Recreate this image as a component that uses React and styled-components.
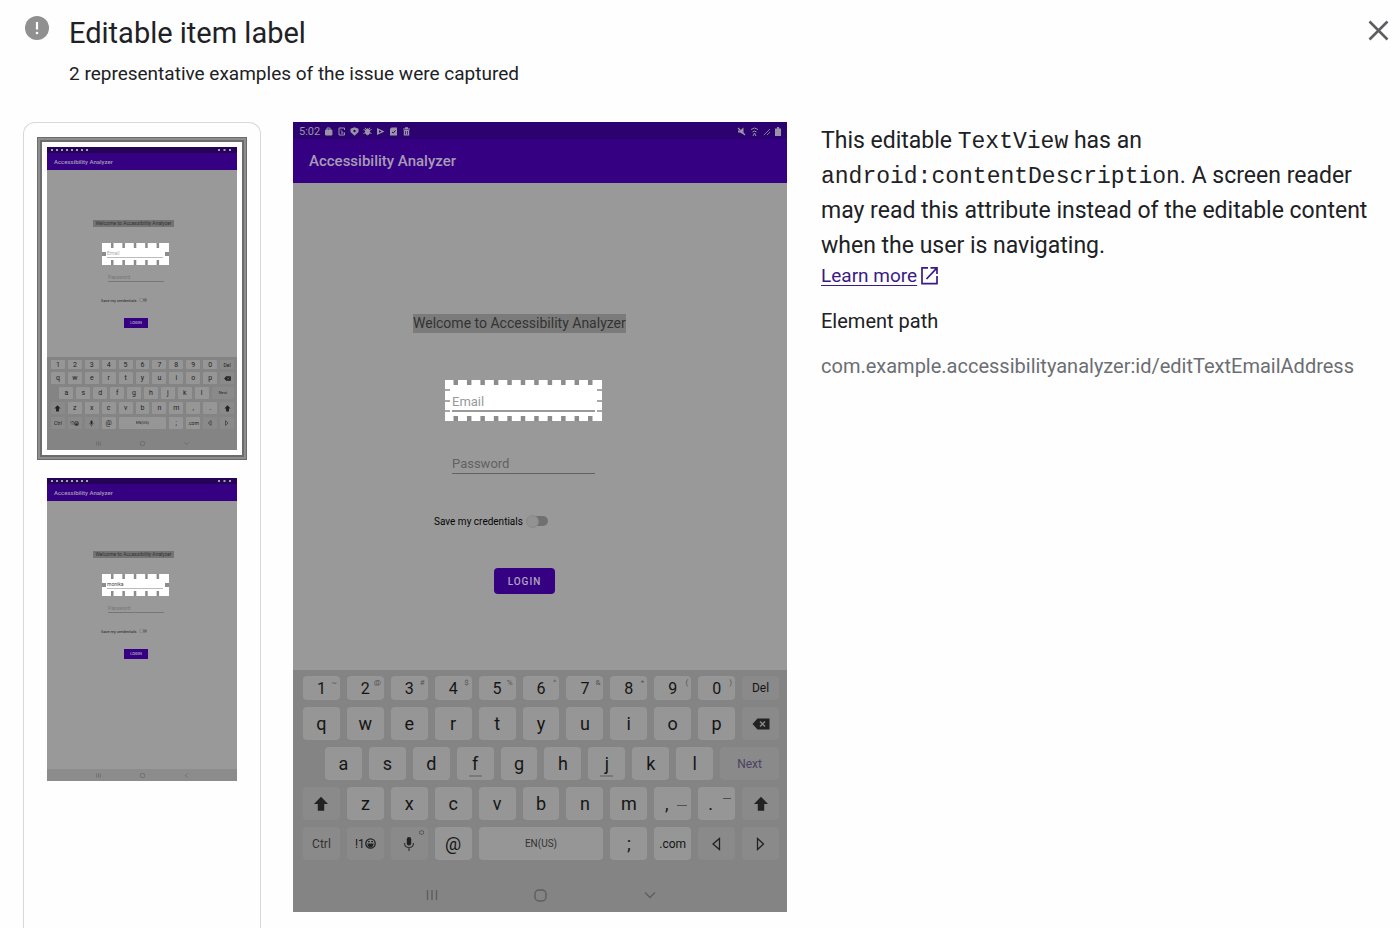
import React from "react";
import styled, { createGlobalStyle, css } from "styled-components";

const GlobalStyle = createGlobalStyle`
  *, *::before, *::after { box-sizing: border-box; }
  body {
    margin: 0;
    background: #fefefe;
    color: #202124;
    font-family: Roboto, "Liberation Sans", sans-serif;
  }
  button, input { font: inherit; color: inherit; margin: 0; padding: 0; border: 0; background: none; }
  button { cursor: pointer; }
`;

/* ---------- Dialog ---------- */

const Dialog = styled.main`
  display: flex;
  flex-direction: column;
  min-height: 100vh;
`;

const Header = styled.header`
  display: flex;
  align-items: flex-start;
  padding: 16px 11px 0 25px;
  height: 122px;
`;

const HeaderText = styled.div`
  flex: 1;
  padding-left: 20px;
`;

const Title = styled.h1`
  margin: 0;
  font-size: 29px;
  line-height: 34px;
  font-weight: 400;
`;

const Subtitle = styled.p`
  margin: 12px 0 0;
  font-size: 19px;
  line-height: 24px;
`;

const CloseButton = styled.button`
  display: flex;
  margin-top: 4px;
`;

const Content = styled.div`
  flex: 1;
  display: grid;
  grid-template-columns: 238px 494px minmax(0, 1fr);
  column-gap: 32px;
  padding: 0 24px 0 23px;
`;

const ThumbList = styled.nav`
  display: flex;
  flex-direction: column;
  align-items: center;
  gap: 8px;
  padding: 14px 0;
  border: 1px solid #d5d8dc;
  border-bottom: 0;
  border-radius: 12px 12px 0 0;
`;

const Thumb = styled.button`
  padding: 10px;
  ${(p) =>
    p.$selected &&
    css`
      box-shadow: inset 0 0 0 1px #6c6c6c, inset 0 0 0 3px #8e8e8e, inset 0 0 0 5px #6c6c6c;
    `}
`;

/* ---------- Captured screen ---------- */

const Screen = styled.section`
  display: flex;
  flex-direction: column;
  height: 790px;
  background: #999;
  color: #151515;
`;

const StatusBar = styled.div`
  display: flex;
  align-items: center;
  justify-content: space-between;
  height: 17px;
  padding: 2px 6px 0 6px;
  background: #2c0270;
  color: #9a93a8;
  font-size: 11px;
`;

const StatusGroup = styled.div`
  display: flex;
  align-items: center;
  gap: 4px;
`;

const AppBar = styled.div`
  display: flex;
  align-items: center;
  height: 44px;
  padding-left: 16px;
  background: #360083;
  color: #a69cb5;
  font-size: 15px;
  font-weight: 500;
`;

const Form = styled.form`
  flex: 1;
  display: flex;
  flex-direction: column;
  align-items: flex-start;
  padding: 131px 0 0 120px;
`;

const Welcome = styled.div`
  background: #7b7b7b;
  color: #333;
  font-size: 14px;
  line-height: 19px;
`;

const Highlight = styled.div`
  position: relative;
  width: 157px;
  height: 41px;
  margin: 47px 0 0 32px;
  padding: 10px 7px 8px;
  background: #fff;
`;

const Teeth = styled.svg`
  position: absolute;
  inset: 0;
`;

const Field = styled.input`
  display: block;
  width: 143px;
  height: 22px;
  padding-top: 2px;
  border-bottom: 1px solid #626262;
  outline: 0;
  font-size: 13px;
  &::placeholder { color: #626262; opacity: 1; }
`;

const EmailField = styled(Field)`
  border-bottom: 2px solid #9a9a9a;
  &::placeholder { color: #999; }
`;

const PasswordField = styled(Field)`
  margin: 31px 0 0 39px;
`;

const SaveRow = styled.label`
  display: flex;
  align-items: center;
  gap: 3px;
  height: 20px;
  margin: 37px 0 0 21px;
  font-size: 10px;
  color: #050505;
`;

const Switch = styled.input`
  appearance: none;
  display: flex;
  align-items: center;
  width: 22px;
  height: 10px;
  border-radius: 5px;
  background: linear-gradient(90deg, transparent 8px, #707070 8px);
  &::before {
    content: "";
    width: 13px;
    height: 13px;
    flex: none;
    border-radius: 50%;
    background: #929292;
    border: 1px solid #898989;
  }
`;

const Login = styled.button`
  width: 61px;
  height: 26px;
  margin: 37px 0 0 81px;
  border-radius: 4px;
  background: #360083;
  color: #b0a5bf;
  font-size: 10px;
  font-weight: 500;
  letter-spacing: 1px;
`;

const Keyboard = styled.div`
  display: flex;
  flex-direction: column;
  gap: 7px;
  height: 242px;
  padding: 6px 8px 0 10px;
  background: #848484;
`;

const KeyRow = styled.div`
  display: grid;
  grid-template-columns: repeat(22, minmax(0, 1fr));
  column-gap: 7px;
  height: ${(p) => (p.$short ? 24 : 33)}px;
`;

const Key = styled.button`
  position: relative;
  display: flex;
  align-items: center;
  justify-content: center;
  grid-column: ${(p) => (p.$start ? `${p.$start} / ` : "")} span ${(p) => p.$span || 2};
  border-radius: 4px;
  background: ${(p) => (p.$dim ? "#8a8a8a" : "#969696")};
  color: ${(p) => p.$color || "#151515"};
  font-size: ${(p) => p.$size || 18}px;
`;

const CommaKey = styled(Key)`
  padding-right: 12px;
`;

const PeriodKey = styled(Key)`
  padding-right: 12px;
`;

const Hint = styled.sup`
  position: absolute;
  top: 2px;
  right: 3px;
  font-size: 8px;
  line-height: 9px;
  color: #555;
`;

const Dash = styled.span`
  position: absolute;
  top: ${(p) => (p.$high ? 11 : 18)}px;
  right: 4px;
  width: ${(p) => (p.$high ? 8 : 10)}px;
  height: 1px;
  background: #505050;
`;

const HomeMark = styled.span`
  position: absolute;
  bottom: 3px;
  width: 13px;
  height: 2px;
  background: #7a7a7a;
`;

const NavBar = styled.div`
  display: flex;
  flex: 1;
  align-items: center;
  justify-content: space-around;
  padding: 11px 75px 0;
`;

/* ---------- Details ---------- */

const Details = styled.section`
  padding: 1px 0 0 2px;
`;

const Description = styled.p`
  margin: 0;
  font-size: 23px;
  line-height: 35px;
  code {
    font-family: "Courier New", "Liberation Mono", monospace;
    font-size: 23px;
    line-height: 24px;
  }
`;

const LearnMore = styled.a`
  display: flex;
  align-items: center;
  gap: 2px;
  height: 24px;
  color: #3b1a86;
  font-size: 19px;
  text-underline-offset: 3px;
`;

const PathLabel = styled.h2`
  margin: 22px 0 0;
  font-size: 20px;
  line-height: 24px;
  font-weight: 400;
`;

const PathValue = styled.p`
  margin: 21px 0 0;
  font-size: 20px;
  line-height: 24px;
  color: #6b6e72;
  overflow-wrap: anywhere;
`;

/* ---------- Thumbnail parts ---------- */

const Mini = styled.span`
  display: flex;
  flex-direction: column;
  width: 190px;
  height: 303px;
  background: #999;
  color: #333;
  text-align: left;
`;

const MiniStatus = styled.span`
  display: flex;
  align-items: center;
  justify-content: space-between;
  height: 6px;
  padding: 0 3px;
  background: #250458;
`;

const MiniBar = styled.span`
  display: flex;
  align-items: center;
  height: 17px;
  padding-left: 7px;
  background: #360083;
  color: #a69cb5;
  font-size: 6px;
  font-weight: 500;
`;

const MiniBody = styled.span`
  flex: 1;
  display: flex;
  flex-direction: column;
  align-items: flex-start;
  padding: 50px 0 0 46px;
`;

const MiniWelcome = styled.span`
  width: 81px;
  background: #747474;
  color: #333;
  font-size: 5px;
  line-height: 7px;
  text-align: center;
  white-space: nowrap;
`;

const MiniHighlight = styled.span`
  position: relative;
  display: block;
  width: 67px;
  height: 22px;
  margin: 16px 0 0 9px;
  padding: 7px 5px 0;
  background: #fff;
`;

const MiniField = styled.span`
  display: block;
  width: 56px;
  height: 8px;
  border-bottom: 1px solid ${(p) => (p.$lit ? "#bbb" : "#777")};
  color: ${(p) => (p.$filled ? "#444" : p.$lit ? "#aaa" : "#757575")};
  font-size: 5px;
  line-height: 7px;
`;

const MiniPassword = styled(MiniField)`
  margin: 9px 0 0 15px;
`;

const MiniSave = styled.span`
  display: flex;
  align-items: center;
  gap: 2px;
  margin: 14px 0 0 8px;
  height: 8px;
  color: #222;
  font-size: 4px;
`;

const MiniSwitch = styled.span`
  width: 8px;
  height: 4px;
  border-radius: 2px;
  border: 1px solid #8a8a8a;
  border-right: 4px solid #707070;
`;

const MiniLogin = styled.span`
  width: 24px;
  height: 10px;
  margin: 14px 0 0 31px;
  background: #360083;
  color: #b5abc4;
  font-size: 4px;
  font-weight: 500;
  line-height: 10px;
  text-align: center;
`;

const MiniKeyboard = styled.span`
  display: flex;
  flex-direction: column;
  gap: 3px;
  height: 79px;
  padding: 3px 3px 0 4px;
  background: #848484;
`;

const MiniRow = styled.span`
  display: grid;
  grid-template-columns: repeat(22, minmax(0, 1fr));
  column-gap: 3px;
  height: ${(p) => (p.$short ? 9 : 12)}px;
`;

const MiniKey = styled.span`
  display: flex;
  align-items: center;
  justify-content: center;
  grid-column: ${(p) => (p.$start ? `${p.$start} / ` : "")} span ${(p) => p.$span || 2};
  border-radius: 1px;
  background: ${(p) => (p.$dim ? "#8a8a8a" : "#969696")};
  color: #222;
  font-size: ${(p) => p.$size || 7}px;
  line-height: 8px;
`;

const MiniNav = styled.span`
  display: flex;
  align-items: center;
  justify-content: space-around;
  height: ${(p) => (p.$tall ? 14 : 12)}px;
  padding: 0 29px;
  background: ${(p) => (p.$tall ? "#848484" : "#8c8c8c")};
`;

/* ---------- Icons ---------- */

const AlertIcon = () => (
  <svg width="24" height="24" viewBox="0 0 24 24" aria-hidden="true">
    <circle cx="12" cy="12" r="12" fill="#909090" />
    <path d="M12 6v7.5" stroke="#fff" strokeWidth="2.2" />
    <circle cx="12" cy="17" r="1.3" fill="#fff" />
  </svg>
);

const CloseIcon = () => (
  <svg width="21" height="21" viewBox="0 0 21 21" aria-hidden="true">
    <path d="M1.5 1.5l18 18M19.5 1.5l-18 18" stroke="#5c5e61" strokeWidth="2.6" />
  </svg>
);

const ExternalIcon = () => (
  <svg width="21" height="21" viewBox="0 0 21 21" fill="none" stroke="#3b1a86" strokeWidth="1.7" aria-hidden="true">
    <path d="M9 2.8H3v15.900h15V11M11.500 2.800H18v6.200M18 2.800L7.500 14" />
  </svg>
);

const BagIcon = () => (
  <svg width="9" height="9" viewBox="0 0 9 9"><path d="M3 3V1h3v2" stroke="currentColor" fill="none" /><rect x="1" y="2.5" width="7.4" height="6" rx="1.2" fill="currentColor" /></svg>
);
const PhotoIcon = () => (
  <svg width="9" height="9" viewBox="0 0 9 9" fill="none" stroke="currentColor"><path d="M7.500 3V1H2v7h5.500V5.500M3.500 3.200l2.500 2.300M4 6h2.500" /></svg>
);
const ShieldIcon = () => (
  <svg width="9" height="9" viewBox="0 0 9 9"><path d="M4.500.3l4 1.400v3.300L4.500 8.800.5 5V1.700z" fill="currentColor" /><circle cx="4.5" cy="4" r="1.2" fill="#2c0270" /></svg>
);
const BugIcon = () => (
  <svg width="9" height="9" viewBox="0 0 9 9" stroke="currentColor"><path d="M.5 2.500l8 4M.5 6.500l8-4M2 .8l1 1.500M7 .8L6 2.300" /><ellipse cx="4.500" cy="4.800" rx="2" ry="3" fill="currentColor" /></svg>
);
const PlayIcon = () => (
  <svg width="9" height="9" viewBox="0 0 9 9"><path d="M1 1l7.500 3.500L1 8z" fill="currentColor" /><path d="M3 3.200l2.500 1.300L3 5.800z" fill="#2c0270" /></svg>
);
const CheckIcon = () => (
  <svg width="9" height="9" viewBox="0 0 9 9"><path d="M2.500.5h5.500V8.500H1V2z" fill="currentColor" /><path d="M3 5l1.300 1L6.500 3.500" stroke="#2c0270" fill="none" /></svg>
);
const TrashIcon = () => (
  <svg width="9" height="9" viewBox="0 0 9 9"><path d="M1 1.500h7v1H1zM3 .3h3v1.200H3zM1.800 3h5.400v5.500H1.800z" fill="currentColor" /><path d="M3.500 4v3.500M5.500 4v3.500" stroke="#2c0270" strokeWidth=".7" /></svg>
);
const MuteIcon = () => (
  <svg width="9" height="9" viewBox="0 0 9 9"><path d="M1 3.500h2L6.500.5v7L3 5.500H1z" fill="currentColor" /><path d="M1 1l7 7" stroke="currentColor" strokeWidth="1.300" /></svg>
);
const WifiIcon = () => (
  <svg width="9" height="10" viewBox="0 0 9 10" fill="none" stroke="currentColor"><path d="M1 2.500Q4.500-.5 8 2.500M2.500 5Q4.500 3 6.500 5M3 9l1.500-3L6 9" /></svg>
);
const SignalIcon = () => (
  <svg width="8" height="9" viewBox="0 0 8 9" fill="none" stroke="currentColor" strokeWidth=".8"><path d="M1 8l6-6M4 8l3-3" /></svg>
);
const BatteryIcon = () => (
  <svg width="6" height="9" viewBox="0 0 6 9"><path d="M2 0h2v1.500h2V9H0V1.500h2z" fill="currentColor" /></svg>
);

const ShiftIcon = ({ size = 16 }) => (
  <svg width={size} height={size} viewBox="0 0 16 16"><path d="M8 .8l7 7.200h-3.800v6.700H4.800V8H1z" fill="#222" /></svg>
);
const BackspaceIcon = ({ size = 18 }) => (
  <svg width={size} height={size} viewBox="0 0 18 18"><path d="M5.500 3.500H17.500v11H5.500L.5 9z" fill="#222" /><path d="M8 6.500l5 5M13 6.500l-5 5" stroke="#8a8a8a" strokeWidth="1.500" /></svg>
);
const MicIcon = ({ size = 16 }) => (
  <svg width={size} height={size} viewBox="0 0 16 16"><rect x="5.800" y="1" width="4.400" height="8.500" rx="2.200" fill="#222" /><path d="M3.500 7c0 6 9 6 9 0M8 11.500V15" stroke="#333" fill="none" strokeWidth="1.200" /></svg>
);
const SmileIcon = ({ size = 11 }) => (
  <svg width={size} height={size} viewBox="0 0 11 11"><circle cx="5.500" cy="5.500" r="4.700" fill="none" stroke="#222" strokeWidth="1.300" /><path d="M3 6h5q-.5 2.800-2.500 2.800T3 6zM3 3.700h1.800M6.200 3.700H8" stroke="#222" fill="#222" strokeWidth="1.200" /></svg>
);
const TriangleIcon = ({ right, size = 14 }) => (
  <svg width={size} height={size} viewBox="0 0 14 14" fill="none" stroke="#222" strokeWidth="1.300">
    <path d={right ? "M3.500 1.500v11l6-5.500z" : "M9.500 1.500v11L3 7z"} />
  </svg>
);
const GearIcon = () => (
  <svg width="7" height="7" viewBox="0 0 7 7" fill="none" stroke="#555"><circle cx="3.500" cy="3.500" r="2" strokeDasharray="1.400 .5" strokeWidth="1.200" /></svg>
);
const RecentsIcon = ({ size = 12 }) => (
  <svg width={size} height={size} viewBox="0 0 12 12" stroke="#5e5e5e" strokeWidth="1.400"><path d="M1.500 1v10M6 1v10M10.500 1v10" /></svg>
);
const HomeIcon = ({ size = 13 }) => (
  <svg width={size} height={size} viewBox="0 0 13 13" fill="none" stroke="#5e5e5e" strokeWidth="1.400"><rect x="1" y="1" width="11" height="11" rx="4" /></svg>
);
const DownIcon = ({ size = 12 }) => (
  <svg width={size} height={size} viewBox="0 0 12 12" fill="none" stroke="#5e5e5e" strokeWidth="1.400"><path d="M1 3.500l5 5 5-5" /></svg>
);
const BackIcon = ({ size = 12 }) => (
  <svg width={size} height={size} viewBox="0 0 12 12" fill="none" stroke="#5e5e5e" strokeWidth="1.400"><path d="M8.500 1l-5 5 5 5" /></svg>
);

/* ---------- Keyboard content ---------- */

const digits = [
  ["1", "~"], ["2", "@"], ["3", "#"], ["4", "$"], ["5", "%"],
  ["6", "^"], ["7", "&"], ["8", "*"], ["9", "("], ["0", ")"],
];

const Letters = ({ text, start }) =>
  [...text].map((c, i) => (
    <Key key={c} type="button" $start={i === 0 ? start : undefined}>
      {c}
      {(c === "f" || c === "j") && <HomeMark />}
    </Key>
  ));

const MiniLetters = ({ text, start }) =>
  [...text].map((c, i) => (
    <MiniKey key={c} $start={i === 0 ? start : undefined}>{c}</MiniKey>
  ));

function FullKeyboard() {
  return (
    <Keyboard>
      <KeyRow $short>
        {digits.map(([d, h]) => (
          <Key key={d} type="button" $size={16}>{d}<Hint>{h}</Hint></Key>
        ))}
        <Key type="button" $dim $size={12}>Del</Key>
      </KeyRow>
      <KeyRow>
        <Letters text="qwertyuiop" />
        <Key type="button" $dim aria-label="Backspace"><BackspaceIcon /></Key>
      </KeyRow>
      <KeyRow>
        <Letters text="asdfghjkl" start={2} />
        <Key type="button" $dim $span={3} $size={12} $color="#4b4062">Next</Key>
      </KeyRow>
      <KeyRow>
        <Key type="button" $dim aria-label="Left shift"><ShiftIcon /></Key>
        <Letters text="zxcvbnm" />
        <CommaKey type="button">,<Dash /></CommaKey>
        <PeriodKey type="button">.<Dash $high /></PeriodKey>
        <Key type="button" $dim aria-label="Right shift"><ShiftIcon /></Key>
      </KeyRow>
      <KeyRow>
        <Key type="button" $dim $size={12} $color="#333">Ctrl</Key>
        <Key type="button" $dim $size={12}>!1<SmileIcon /></Key>
        <Key type="button" $dim aria-label="Voice input"><MicIcon /><Hint><GearIcon /></Hint></Key>
        <Key type="button">@</Key>
        <Key type="button" $span={6} $size={10} $color="#333">EN(US)</Key>
        <Key type="button">;</Key>
        <Key type="button" $size={12}>.com</Key>
        <Key type="button" $dim aria-label="Cursor left"><TriangleIcon /></Key>
        <Key type="button" $dim aria-label="Cursor right"><TriangleIcon right /></Key>
      </KeyRow>
      <NavBar><RecentsIcon /><HomeIcon /><DownIcon /></NavBar>
    </Keyboard>
  );
}

function SmallKeyboard() {
  return (
    <MiniKeyboard>
      <MiniRow $short>
        <MiniLetters text="1234567890" />
        <MiniKey $dim $size={5}>Del</MiniKey>
      </MiniRow>
      <MiniRow>
        <MiniLetters text="qwertyuiop" />
        <MiniKey $dim><BackspaceIcon size={7} /></MiniKey>
      </MiniRow>
      <MiniRow>
        <MiniLetters text="asdfghjkl" start={2} />
        <MiniKey $dim $span={3} $size={4}>Next</MiniKey>
      </MiniRow>
      <MiniRow>
        <MiniKey $dim><ShiftIcon size={7} /></MiniKey>
        <MiniLetters text="zxcvbnm,." />
        <MiniKey $dim><ShiftIcon size={7} /></MiniKey>
      </MiniRow>
      <MiniRow>
        <MiniKey $dim $size={5}>Ctrl</MiniKey>
        <MiniKey $dim $size={5}>!1<SmileIcon size={5} /></MiniKey>
        <MiniKey $dim><MicIcon size={7} /></MiniKey>
        <MiniKey>@</MiniKey>
        <MiniKey $span={6} $size={4}>EN(US)</MiniKey>
        <MiniKey>;</MiniKey>
        <MiniKey $size={5}>.com</MiniKey>
        <MiniKey $dim><TriangleIcon size={6} /></MiniKey>
        <MiniKey $dim><TriangleIcon right size={6} /></MiniKey>
      </MiniRow>
    </MiniKeyboard>
  );
}

function MiniScreen({ email, filled, keyboard }) {
  return (
    <Mini>
      <MiniStatus>
        <svg width="48" height="4" viewBox="0 0 48 4"><path d="M1 2h40" stroke="#a79fb5" strokeWidth="2" strokeDasharray="2 3" /></svg>
        <svg width="18" height="4" viewBox="0 0 18 4"><path d="M2 2h15" stroke="#a79fb5" strokeWidth="2" strokeDasharray="2 3.500" /></svg>
      </MiniStatus>
      <MiniBar>Accessibility Analyzer</MiniBar>
      <MiniBody>
        <MiniWelcome>Welcome to Accessibility Analyzer</MiniWelcome>
        <MiniHighlight>
          <MiniField $lit $filled={filled}>{email}</MiniField>
          <Teeth width="67" height="22" viewBox="0 0 67 22" stroke="#8c8c8c" fill="none">
            <path d="M9 2.500H60M9 19.500H60" strokeWidth="5" strokeDasharray="2.500 8.900" />
            <path d="M0 11h4M63 11h4" strokeWidth="4" />
          </Teeth>
        </MiniHighlight>
        <MiniPassword>Password</MiniPassword>
        <MiniSave>Save my credentials<MiniSwitch /></MiniSave>
        <MiniLogin>LOGIN</MiniLogin>
      </MiniBody>
      {keyboard && <SmallKeyboard />}
      <MiniNav $tall={keyboard}>
        <RecentsIcon size={5} /><HomeIcon size={5} />
        {keyboard ? <DownIcon size={5} /> : <BackIcon size={5} />}
      </MiniNav>
    </Mini>
  );
}

function CapturedScreen() {
  return (
    <Screen aria-label="Captured screen">
      <StatusBar>
        <StatusGroup>
          5:02 <BagIcon /><PhotoIcon /><ShieldIcon /><BugIcon /><PlayIcon /><CheckIcon /><TrashIcon />
        </StatusGroup>
        <StatusGroup><MuteIcon /><WifiIcon /><SignalIcon /><BatteryIcon /></StatusGroup>
      </StatusBar>
      <AppBar>Accessibility Analyzer</AppBar>
      <Form onSubmit={(e) => e.preventDefault()}>
        <Welcome>Welcome to Accessibility Analyzer</Welcome>
        <Highlight>
          <EmailField type="email" placeholder="Email" aria-label="Email" />
          <Teeth width="157" height="41" viewBox="0 0 157 41" stroke="#8c8c8c" fill="none" pointerEvents="none">
            <path d="M8.500 2.500H150M8.500 38.500H150" strokeWidth="5" strokeDasharray="4.500 8.950" />
            <path d="M0 10h5M0 21h5M0 31h5M152 10h5M152 21h5M152 31h5" strokeWidth="1.500" />
          </Teeth>
        </Highlight>
        <PasswordField type="password" placeholder="Password" aria-label="Password" />
        <SaveRow>Save my credentials<Switch type="checkbox" role="switch" /></SaveRow>
        <Login type="submit">LOGIN</Login>
      </Form>
      <FullKeyboard />
    </Screen>
  );
}

export default function App() {
  return (
    <>
      <GlobalStyle />
      <Dialog>
        <Header>
          <AlertIcon />
          <HeaderText>
            <Title>Editable item label</Title>
            <Subtitle>2 representative examples of the issue were captured</Subtitle>
          </HeaderText>
          <CloseButton type="button" aria-label="Close"><CloseIcon /></CloseButton>
        </Header>
        <Content>
          <ThumbList aria-label="Examples">
            <Thumb type="button" $selected><MiniScreen email="Email" keyboard /></Thumb>
            <Thumb type="button"><MiniScreen email="monika" filled /></Thumb>
          </ThumbList>
          <CapturedScreen />
          <Details>
            <Description>
              This editable <code>TextView</code> has an <code>android:contentDescription</code>. A screen
              reader may read this attribute instead of the editable content when the user is navigating.
            </Description>
            <LearnMore href="#learn-more">Learn more <ExternalIcon /></LearnMore>
            <PathLabel>Element path</PathLabel>
            <PathValue>com.example.accessibilityanalyzer:id/editTextEmailAddress</PathValue>
          </Details>
        </Content>
      </Dialog>
    </>
  );
}
